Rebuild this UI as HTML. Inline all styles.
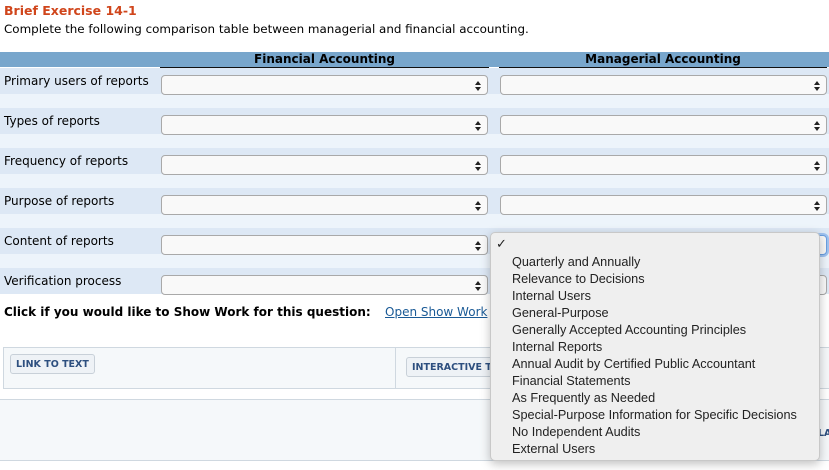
<!DOCTYPE html>
<html><head><meta charset="utf-8"><style>
*{margin:0;padding:0;box-sizing:border-box}
body{width:829px;height:470px;background:#fff;font-family:"DejaVu Sans",Verdana,sans-serif;font-size:12px;color:#000;position:relative;overflow:hidden}
.a{position:absolute}
.t{left:4px;top:3px;color:#d0451b;font-weight:bold;font-size:12.5px}
.sub{left:4px;top:22px;font-size:11.9px}
.hd{left:0;top:52px;width:829px;height:15px;background:#78a6cc}
.hl{top:52px;height:16px;border-bottom:1px solid #111;font-weight:bold;text-align:center;line-height:15px;font-size:12px}
.dk{left:0;width:829px;height:26px;background:#dde8f5}
.lt{left:0;width:829px;height:14px;background:#edf4fb}
.lb{left:4px;font-size:12px}
.sel{height:20px;border:1px solid #a9a9a9;border-radius:4px;background:#f9f9f9}
.sel:after{content:"";position:absolute;right:6px;top:5px;width:0;height:0;border-left:3px solid transparent;border-right:3px solid transparent;border-bottom:4px solid #222}
.sel:before{content:"";position:absolute;right:6px;top:11px;width:0;height:0;border-left:3px solid transparent;border-right:3px solid transparent;border-top:4px solid #222}
.btn{border:1px solid #c8d0d8;border-radius:3px;background:#eef2f6;color:#2d4f7f;font-weight:bold;font-size:9.5px;padding:0 5px;height:20px;line-height:19px}
.dd{left:490px;top:232px;width:330px;height:229px;background:#efefef;border:1px solid #c8c8c8;border-radius:5px;box-shadow:0 3px 10px rgba(0,0,0,.25);font-family:"Liberation Sans",Arial,sans-serif;font-size:12.7px;color:#222}
.dd div{position:absolute;left:21px}
</style></head><body>
<div class="a t">Brief Exercise 14-1</div>
<div class="a sub">Complete the following comparison table between managerial and financial accounting.</div>
<div class="a hd"></div>
<div class="a hl" style="left:160px;width:329px">Financial Accounting</div>
<div class="a hl" style="left:499px;width:328px">Managerial Accounting</div>

<div class="a dk" style="top:68px"></div><div class="a lt" style="top:94px"></div>
<div class="a dk" style="top:108px"></div><div class="a lt" style="top:134px"></div>
<div class="a dk" style="top:148px"></div><div class="a lt" style="top:174px"></div>
<div class="a dk" style="top:188px"></div><div class="a lt" style="top:214px"></div>
<div class="a dk" style="top:228px"></div><div class="a lt" style="top:254px"></div>
<div class="a dk" style="top:268px"></div>

<div class="a lb" style="top:74px">Primary users of reports</div>
<div class="a lb" style="top:114px">Types of reports</div>
<div class="a lb" style="top:154px">Frequency of reports</div>
<div class="a lb" style="top:194px">Purpose of reports</div>
<div class="a lb" style="top:234px">Content of reports</div>
<div class="a lb" style="top:274px">Verification process</div>

<div class="a sel" style="left:161px;top:75px;width:327px"></div><div class="a sel" style="left:500px;top:75px;width:327px"></div>
<div class="a sel" style="left:161px;top:115px;width:327px"></div><div class="a sel" style="left:500px;top:115px;width:327px"></div>
<div class="a sel" style="left:161px;top:155px;width:327px"></div><div class="a sel" style="left:500px;top:155px;width:327px"></div>
<div class="a sel" style="left:161px;top:195px;width:327px"></div><div class="a sel" style="left:500px;top:195px;width:327px"></div>
<div class="a sel" style="left:161px;top:235px;width:327px"></div><div class="a sel" style="left:500px;top:235px;width:327px;border-color:#6a9fe0;box-shadow:0 0 0 2px #9ec2f0"></div>
<div class="a sel" style="left:161px;top:275px;width:327px"></div><div class="a sel" style="left:500px;top:275px;width:327px"></div>

<div class="a" style="left:4px;top:305px;font-weight:bold">Click if you would like to Show Work for this question:</div>
<div class="a" style="left:385px;top:305px;color:#1a5a96;text-decoration:underline">Open Show Work</div>

<div class="a" style="left:3px;top:347px;width:830px;height:42px;background:#f5f8fa;border:1px solid #cfd8e0"></div>
<div class="a" style="left:395px;top:347px;width:1px;height:42px;background:#cfd8e0"></div>
<div class="a btn" style="left:10px;top:354px">LINK TO TEXT</div>
<div class="a btn" style="left:406px;top:357px;width:100px;overflow:hidden;white-space:nowrap">INTERACTIVE TUTORIAL</div>
<div class="a" style="left:0;top:399px;width:829px;height:62px;background:#f5f8fa;border-top:1px solid #cfd8e0;border-bottom:1px solid #cfd8e0"></div>
<div class="a" style="left:818px;top:428px;color:#2d4f7f;font-weight:bold;font-size:9.5px">LA</div>

<div class="a dd">
<div style="left:5px;top:3px;font-size:13px">✓</div>
<div style="top:22px">Quarterly and Annually</div>
<div style="top:39px">Relevance to Decisions</div>
<div style="top:56px">Internal Users</div>
<div style="top:73px">General-Purpose</div>
<div style="top:90px">Generally Accepted Accounting Principles</div>
<div style="top:107px">Internal Reports</div>
<div style="top:124px">Annual Audit by Certified Public Accountant</div>
<div style="top:141px">Financial Statements</div>
<div style="top:158px">As Frequently as Needed</div>
<div style="top:175px">Special-Purpose Information for Specific Decisions</div>
<div style="top:192px">No Independent Audits</div>
<div style="top:209px">External Users</div>
</div>
</body></html>
